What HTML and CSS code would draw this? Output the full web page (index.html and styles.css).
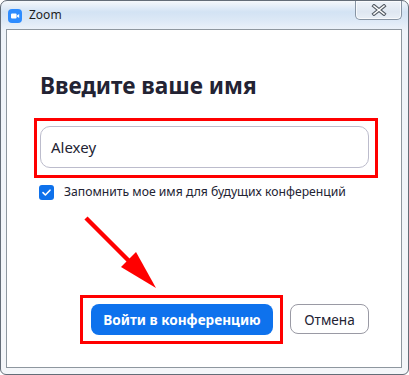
FILE: index.html
```html
<!DOCTYPE html>
<html lang="ru">
<head>
<meta charset="utf-8">
<title>Zoom</title>
<link rel="stylesheet" href="styles.css">
</head>
<body>
<div class="window">
  <div class="titlebar">
    <svg class="app-icon" viewBox="0 0 14 14" width="14" height="14">
      <rect x="0" y="0" width="14" height="14" rx="4" fill="#2d8cff"/>
      <rect x="3" y="4.6" width="5.6" height="4.8" rx="1" fill="#fff"/>
      <path d="M9 6.4 L11.2 5 V9 L9 7.6 Z" fill="#fff"/>
    </svg>
    <span class="title">Zoom</span>
    <div class="close">
      <svg viewBox="0 0 16 12" width="16" height="12">
        <path d="M3 2 L13 10 M13 2 L3 10" stroke="#555d66" stroke-width="3.6" stroke-linecap="square"/>
        <path d="M3 2 L13 10 M13 2 L3 10" stroke="#ffffff" stroke-width="1.6" stroke-linecap="square"/>
      </svg>
    </div>
  </div>
  <div class="panel">
    <h1 class="heading">Введите ваше имя</h1>
    <div class="field">Alexey</div>
    <div class="remember">
      <span class="check">
        <svg viewBox="0 0 15 15" width="15" height="15"><path d="M4 7.6 L6.4 10 L11 5.2" fill="none" stroke="#fff" stroke-width="1.6" stroke-linecap="round" stroke-linejoin="round"/></svg>
      </span>
      <span class="remember-text">Запомнить мое имя для будущих конференций</span>
    </div>
    <div class="actions">
      <div class="btn btn-join">Войти в конференцию</div>
      <div class="btn btn-cancel">Отмена</div>
    </div>
  </div>
  <div class="mark mark-field"></div>
  <div class="mark mark-join"></div>
  <svg class="arrow" viewBox="0 0 409 375" width="409" height="375">
    <line x1="86" y1="218" x2="136" y2="268" stroke="#ff0000" stroke-width="4.5"/>
    <polygon points="156,288 121,267 136,252" fill="#ff0000"/>
  </svg>
</div>
</body>
</html>
```
FILE: styles.css
```css
* { box-sizing: border-box; }
html, body { margin: 0; padding: 0; }
body { width: 409px; height: 375px; overflow: hidden; background: #fff; font-family: "Noto Sans", "Open Sans", sans-serif; }

.window {
  position: relative;
  width: 409px;
  height: 375px;
  border: 1px solid #646d78;
  border-radius: 7px 7px 6px 6px;
  background: linear-gradient(to bottom, #f5f8fb 0px, #d3e3f4 11px, #dde9f6 20px, #eef3f9 30px, #f4f6f9 100%);
  display: flex;
  flex-direction: column;
  overflow: hidden;
}

.titlebar {
  height: 28px;
  display: flex;
  align-items: flex-start;
  padding-left: 7px;
  flex: none;
}
.app-icon { margin-top: 8px; flex: none; }
.title {
  margin-left: 7px;
  margin-top: 6px;
  font-size: 12px;
  color: #1e1e1e;
  line-height: 16px;
}
.close {
  margin-left: auto;
  margin-right: 6px;
  width: 47px;
  height: 19px;
  border: 1px solid #8794a3;
  border-top: none;
  border-radius: 0 0 5px 5px;
  background: linear-gradient(to bottom, #eef3f9, #dfe7f1 60%, #e9eff6);
  display: flex;
  align-items: center;
  justify-content: center;
  box-shadow: inset 0 0 0 1px rgba(255,255,255,0.7);
}

.panel {
  flex: 1;
  margin: 0 6px 6px 5px;
  border: 1px solid #8e979f;
  background: #ffffff;
  padding: 0 32px 0 33px;
  display: flex;
  flex-direction: column;
}

.heading {
  margin: 41px 0 0 0;
  font-size: 22.6px;
  line-height: 30px;
  font-weight: 700;
  color: #232333;
}

.field {
  margin-top: 25px;
  height: 42px;
  border: 1px solid #bcbccc;
  border-radius: 10px;
  padding-left: 10px;
  display: flex;
  align-items: center;
  font-size: 15px;
  color: #232333;
}

.remember {
  margin-top: 16px;
  margin-left: -1px;
  display: flex;
  align-items: center;
  gap: 10px;
}
.check {
  width: 15px;
  height: 15px;
  border-radius: 3px;
  background: #0e71eb;
  display: flex;
  flex: none;
}
.remember-text {
  font-size: 12.2px;
  color: #232333;
  line-height: 16px;
}

.actions {
  margin-top: auto;
  margin-bottom: 32px;
  display: flex;
  justify-content: flex-end;
  gap: 17px;
}
.btn {
  height: 31px;
  border-radius: 8px;
  display: flex;
  align-items: center;
  justify-content: center;
  font-size: 13.6px;
}
.btn-join {
  width: 182px;
  background: #0e72ed;
  color: #fff;
  font-weight: 700;
}
.btn-cancel {
  width: 79px;
  height: 30px;
  border: 1px solid #9a9aa4;
  color: #232333;
  background: #fff;
}

.mark {
  position: absolute;
  border: 3px solid #ff0000;
}
.mark-field { left: 33px; top: 117px; width: 344px; height: 60px; }
.mark-join { left: 79px; top: 294px; width: 203px; height: 49px; }

.arrow {
  position: absolute;
  left: -1px;
  top: -1px;
  pointer-events: none;
}
```
